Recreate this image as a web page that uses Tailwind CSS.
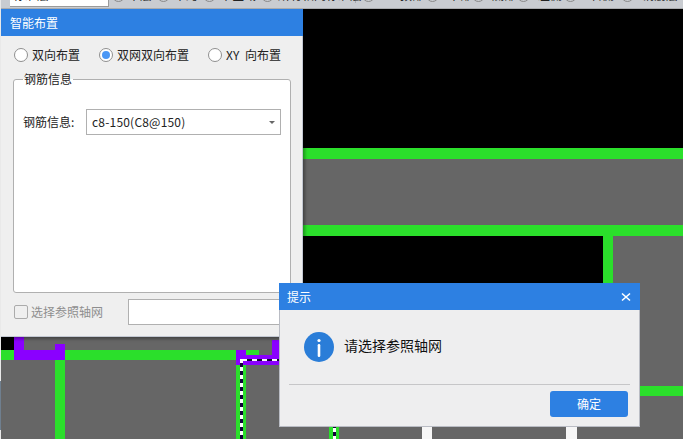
<!DOCTYPE html>
<html lang="zh">
  <head>
    <meta charset="UTF-8" />
    <title>智能布置</title>
    <script src="https://cdn.jsdelivr.net/npm/@tailwindcss/browser@4"></script>
  </head>
  <body class="w-[683px] h-[439px] overflow-hidden bg-[#666666] font-['Noto_Sans_CJK_SC','Noto_Sans',sans-serif] text-[12px] text-[#222222]">
    <div class="relative w-[683px] h-[439px] overflow-hidden">
      <!-- toolbar strip, cut off by the top of the window -->
      <div class="h-[9px] bg-[#c9ccd1] border-b border-[#a9abae] relative z-10 overflow-hidden">
        <div class="absolute left-[10px] top-0 w-[99px] h-[7px] bg-white border-r border-b border-[#9a9a9a] overflow-hidden">
          <span class="absolute left-[3px] -top-[13px] leading-[16px] whitespace-nowrap">标准层</span>
        </div>
        <span class="absolute left-[112px] -top-[11px] w-[13px] h-[13px] rounded-full border border-[#8a8a8a]"></span>
        <span class="absolute left-[157px] -top-[11px] w-[13px] h-[13px] rounded-full border border-[#8a8a8a]"></span>
        <span class="absolute left-[203px] -top-[11px] w-[13px] h-[13px] rounded-full border border-[#8a8a8a]"></span>
        <span class="absolute left-[261px] -top-[11px] w-[13px] h-[13px] rounded-full border border-[#8a8a8a]"></span>
        <span class="absolute left-[362px] -top-[11px] w-[13px] h-[13px] rounded-full border border-[#8a8a8a]"></span>
        <span class="absolute left-[426px] -top-[11px] w-[13px] h-[13px] rounded-full border border-[#8a8a8a]"></span>
        <span class="absolute left-[472px] -top-[11px] w-[13px] h-[13px] rounded-full border border-[#8a8a8a]"></span>
        <span class="absolute left-[517px] -top-[11px] w-[13px] h-[13px] rounded-full border border-[#8a8a8a]"></span>
        <span class="absolute left-[564px] -top-[11px] w-[13px] h-[13px] rounded-full border border-[#8a8a8a]"></span>
        <span class="absolute left-[621px] -top-[11px] w-[13px] h-[13px] rounded-full border border-[#8a8a8a]"></span>
        <span class="absolute left-[355px] top-0 w-px h-[3px] bg-[#a9abae]"></span>
        <span class="absolute left-[128px] -top-[13px] leading-[16px] whitespace-nowrap">本层</span>
        <span class="absolute left-[174px] -top-[13px] leading-[16px] whitespace-nowrap">本跨</span>
        <span class="absolute left-[220px] -top-[13px] leading-[16px] whitespace-nowrap">本区域</span>
        <span class="absolute left-[278px] -top-[13px] leading-[16px] whitespace-nowrap">所有相同标准层</span>
        <span class="absolute left-[400px] -top-[13px] leading-[16px] whitespace-nowrap">顶部</span>
        <span class="absolute left-[448px] -top-[13px] leading-[16px] whitespace-nowrap">中部</span>
        <span class="absolute left-[492px] -top-[13px] leading-[16px] whitespace-nowrap">底部</span>
        <span class="absolute left-[538px] -top-[13px] leading-[16px] whitespace-nowrap">左侧</span>
        <span class="absolute left-[590px] -top-[13px] leading-[16px] whitespace-nowrap">右侧</span>
        <span class="absolute left-[642px] -top-[13px] leading-[16px] whitespace-nowrap">钢筋层</span>
      </div>
      <div class="absolute left-0 top-0 w-px h-[439px] bg-[#e9e9e9] z-30"></div>
      <div class="absolute left-0 top-[381px] w-px h-[49px] bg-[#6f7f8f] z-30"></div>

      <!-- cad drawing -->
      <div class="absolute left-[303px] top-[9px] w-[380px] h-[139px] bg-black"></div>
      <div class="absolute left-[303px] top-[148px] w-[380px] h-[11px] bg-[#2bdf2b]"></div>
      <div class="absolute left-[303px] top-[225px] w-[380px] h-[11px] bg-[#2bdf2b]"></div>
      <div class="absolute left-[303px] top-[236px] w-[300px] h-[60px] bg-black"></div>
      <div class="absolute left-[603px] top-[236px] w-[10px] h-[60px] bg-[#2bdf2b]"></div>
      <div class="absolute left-[640px] top-[386px] w-[43px] h-[10px] bg-[#2bdf2b]"></div>
      <div class="absolute left-[422px] top-[420px] w-[10px] h-[19px] bg-[#f6f6f6]"></div>
      <div class="absolute left-[566px] top-[420px] w-[11px] h-[19px] bg-[#f6f6f6]"></div>
      <div class="absolute left-[329px] top-[420px] w-[10px] h-[19px] bg-[#2bdf2b]"></div>
      <div class="absolute left-[333px] top-[420px] w-[3px] h-[19px] bg-[repeating-linear-gradient(to_bottom,#ffffff_0,#ffffff_4px,#12003a_4px,#12003a_8px)]"></div>

      <div class="absolute left-[1px] top-[337px] w-[13px] h-[13px] bg-black"></div>
      <div class="absolute left-[14px] top-[337px] w-[10px] h-[13px] bg-[#8a00ff]"></div>
      <div class="absolute left-[1px] top-[350px] w-[235px] h-[10px] bg-[#2bdf2b]"></div>
      <div class="absolute left-[14px] top-[350px] w-[51px] h-[10px] bg-[#8a00ff]"></div>
      <div class="absolute left-[55px] top-[344px] w-[10px] h-[6px] bg-[#8a00ff]"></div>
      <div class="absolute left-[55px] top-[360px] w-[10px] h-[79px] bg-[#2bdf2b]"></div>
      <div class="absolute left-[246px] top-[350px] w-[13px] h-[5px] bg-[#2bdf2b]"></div>
      <div class="absolute left-[236px] top-[350px] w-[10px] h-[15px] bg-[#8a00ff]"></div>
      <div class="absolute left-[246px] top-[355px] w-[34px] h-[10px] bg-[#8a00ff]"></div>
      <div class="absolute left-[272px] top-[340px] w-[8px] h-[17px] bg-[#8a00ff]"></div>
      <div class="absolute left-[236px] top-[365px] w-[4px] h-[74px] bg-[#2bdf2b]"></div>
      <div class="absolute left-[243px] top-[365px] w-[3px] h-[74px] bg-[#2bdf2b]"></div>
      <div class="absolute left-[242px] top-[359px] w-[37px] h-[2px] bg-[repeating-linear-gradient(to_right,#ffffff_0,#ffffff_5px,#12003a_5px,#12003a_10px)]"></div>
      <div class="absolute left-[240px] top-[359px] w-[3px] h-[80px] bg-[repeating-linear-gradient(to_bottom,#ffffff_0,#ffffff_4px,#12003a_4px,#12003a_8px)]"></div>

      <!-- placement dialog -->
      <div class="absolute left-[1px] top-[9px] w-[302px] h-[328px] bg-[#efefef] border-r border-b border-[#c3c8d2] shadow-[2px_2px_3px_rgba(0,0,0,0.35)] flex flex-col">
        <div class="h-[27px] shrink-0 -mr-px bg-[#2d80e2] text-white flex items-center pl-[9px]">智能布置</div>
        <div class="flex items-center h-[38px] pl-[13px]">
          <span class="w-[14px] h-[14px] rounded-full bg-white border border-[#8f8f8f]"></span>
          <span class="ml-[4px] w-[67px]">双向布置</span>
          <span class="w-[14px] h-[14px] rounded-full bg-white border border-[#8f8f8f] flex items-center justify-center"><span class="block w-[8px] h-[8px] rounded-full bg-[#4b97f5]"></span></span>
          <span class="ml-[4px] w-[91px]">双网双向布置</span>
          <span class="w-[14px] h-[14px] rounded-full bg-white border border-[#8f8f8f]"></span>
          <span class="ml-[4px] [word-spacing:3px]">XY 向布置</span>
        </div>
        <div class="relative ml-[12px] mt-[5px] w-[278px] h-[214px] bg-white border border-[#b0b0b0] rounded-[3px] pt-[29px] pl-[9px]">
          <span class="absolute left-[9px] -top-[9px] px-[1px] bg-[linear-gradient(to_bottom,#efefef_50%,#ffffff_50%)] leading-[16px]">钢筋信息</span>
          <div class="flex items-center">
            <span class="w-[63px]">钢筋信息:</span>
            <div class="w-[195px] h-[26px] border border-[#b0b0b0] bg-white flex items-center justify-between pl-[5px] pr-[5px]">
              <span class="tracking-[0.2px]">c8-150(C8@150)</span>
              <span class="w-0 h-0 border-x-[3px] border-x-transparent border-t-[3px] border-t-[#666666]"></span>
            </div>
          </div>
        </div>
        <div class="flex items-center mt-[6px] pl-[13px]">
          <span class="w-[14px] h-[14px] rounded-[2px] border border-[#ababab]"></span>
          <span class="ml-[3px] w-[97px] text-[#8e8e8e]">选择参照轴网</span>
          <div class="w-[160px] h-[26px] bg-white border border-[#b0b0b0]"></div>
        </div>
      </div>

      <!-- message box -->
      <div class="absolute left-[279px] top-[283px] w-[361px] h-[144px] bg-[#eeeeef] border-x border-b border-[#b9bcc4] flex flex-col z-20">
        <div class="h-[27px] shrink-0 -mx-px bg-[#2d80e2] text-white flex items-center justify-between pl-[8px] pr-[9px]">
          <span>提示</span>
          <svg class="w-[10px] h-[10px]" viewBox="0 0 10 10" fill="none" stroke="#ffffff" stroke-width="1.6"><path d="M1 1.5 9 8.5M9 1.5 1 8.5" /></svg>
        </div>
        <div class="flex items-center h-[74px] pl-[24px]">
          <svg class="w-[30px] h-[30px]" viewBox="0 0 30 30">
            <circle cx="15" cy="15" r="15" fill="#2a7dd8" />
            <circle cx="15" cy="8.5" r="1.6" fill="#ffffff" />
            <rect x="13.7" y="12" width="2.6" height="13" rx="1.3" fill="#ffffff" />
          </svg>
          <span class="ml-[10px] -mt-[4px] text-[#111111] text-[14px]">请选择参照轴网</span>
        </div>
        <div class="mx-[9px] border-t border-[#c6c6c8]"></div>
        <div class="flex justify-end pt-[6px] pr-[11px]">
          <div class="w-[78px] h-[26px] rounded-[3px] bg-[#2d80e2] text-white flex items-center justify-center">确定</div>
        </div>
      </div>
    </div>
  </body>
</html>
